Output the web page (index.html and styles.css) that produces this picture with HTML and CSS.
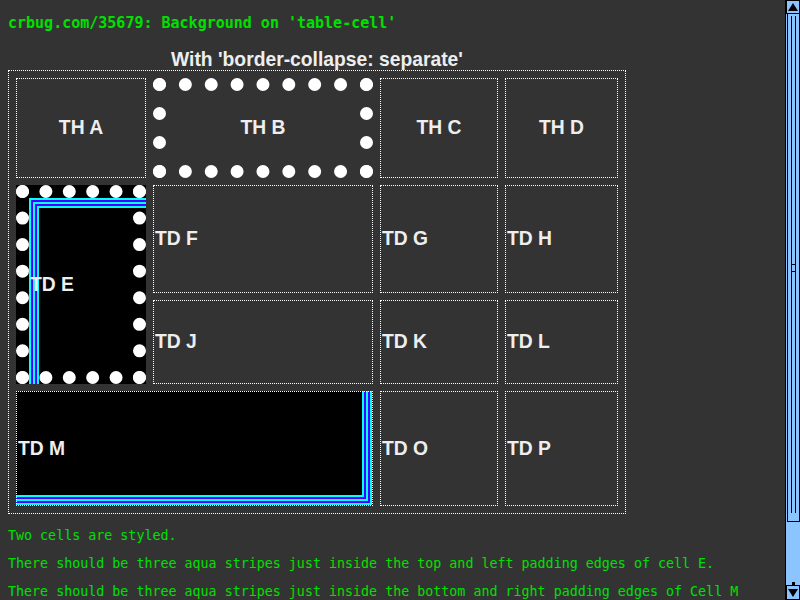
FILE: index.html
```html
<!DOCTYPE html>
<html>
<head>
<meta charset="utf-8">
<title>crbug.com/35679</title>
<link rel="stylesheet" href="styles.css">
</head>
<body>
<p class="title">crbug.com/35679: Background on 'table-cell'</p>
<table class="grid">
  <caption class="cap">With 'border-collapse: separate'</caption>
  <tr class="r1">
    <th class="w1">TH A</th>
    <th class="w2 dots">TH B</th>
    <th class="w3">TH C</th>
    <th class="w4">TH D</th>
  </tr>
  <tr class="r2">
    <td rowspan="2" class="dots cell-e">TD E</td>
    <td>TD F</td>
    <td>TD G</td>
    <td>TD H</td>
  </tr>
  <tr class="r3">
    <td>TD J</td>
    <td>TD K</td>
    <td>TD L</td>
  </tr>
  <tr class="r4">
    <td colspan="2" class="cell-m">TD M</td>
    <td>TD O</td>
    <td>TD P</td>
  </tr>
</table>
<p class="note first">Two cells are styled.</p>
<p class="note">There should be three aqua stripes just inside the top and left padding edges of cell E.</p>
<p class="note">There should be three aqua stripes just inside the bottom and right padding edges of Cell M</p>

<div class="sb">
  <div class="sb-btn sb-up"></div>
  <div class="sb-thumb"><div class="sb-groove"></div><div class="sb-grip"></div></div>
  <div class="sb-track"></div>
  <div class="sb-btn sb-down"></div>
</div>
</body>
</html>
```

FILE: styles.css
```css
html {
  background: #333;
  overflow: hidden;
}
body {
  margin: 0 8px 8px;
  padding-top: 14px;
  background: #333;
  color: #eee;
}
.title {
  font-family: "DejaVu Sans Mono", monospace;
  font-weight: bold;
  font-size: 15px;
  color: #00e000;
  margin: 0 0 18px;
}
.grid {
  border: 1px dotted #fff;
  border-spacing: 7px;
  font-family: "Liberation Sans", Arial, sans-serif;
  font-weight: bold;
  font-size: 19.3px;
  color: #eee;
}
.cap {
  font-family: "Liberation Sans", Arial, sans-serif;
  font-weight: bold;
  font-size: 19.3px;
  line-height: 20px;
  color: #eee;
  padding-bottom: 0;
}
.grid th,
.grid td {
  border: 1px dotted #fff;
  padding: 1px;
  font-weight: bold;
  vertical-align: middle;
}
.grid td { text-align: left; }
.grid th { text-align: center; }
.r1 { height: 100px; }
.r2 { height: 108px; }
.r3 { height: 84px; }
.r4 { height: 115px; }
.w1 { width: 126px; }
.w2 { width: 192px; }
.w3 { width: 114px; }
.w4 { width: 109px; }
.grid .dots {
  border: 13px dotted #fff;
}
.cell-e {
  background-color: #000;
  background-image:
    linear-gradient(#000, #000),
    linear-gradient(#00ffff, #00ffff),
    linear-gradient(#4b00ff, #4b00ff),
    linear-gradient(#00ffff, #00ffff),
    linear-gradient(#4b00ff, #4b00ff),
    linear-gradient(#00ffff, #00ffff);
  background-position: 23px 23px, 21px 21px, 19px 19px, 17px 17px, 15px 15px, 13px 13px;
  background-size: 100% 100%;
  background-repeat: no-repeat;
  background-origin: border-box;
  background-clip: border-box;
}
.cell-m {
  background-color: #000;
  background-image:
    linear-gradient(#000, #000),
    linear-gradient(#00ffff, #00ffff),
    linear-gradient(#4b00ff, #4b00ff),
    linear-gradient(#00ffff, #00ffff),
    linear-gradient(#4b00ff, #4b00ff),
    linear-gradient(#00ffff, #00ffff);
  background-position:
    right 11px bottom 11px,
    right 9px bottom 9px,
    right 7px bottom 7px,
    right 5px bottom 5px,
    right 3px bottom 3px,
    right 1px bottom 1px;
  background-size: 100% 100%;
  background-repeat: no-repeat;
  background-origin: border-box;
  background-clip: border-box;
}
.note {
  font-family: "DejaVu Sans Mono", monospace;
  font-size: 13.333px;
  color: #00e000;
  margin: 13.333px 0;
  white-space: nowrap;
}
.note.first {
  margin-top: 13.5px;
}

/* drawn scrollbar */
.sb {
  position: fixed;
  top: 0;
  right: 0;
  width: 15px;
  height: 600px;
  box-sizing: border-box;
  background: #8cc4ff;
  border-left: 1px solid #000;
  display: flex;
  flex-direction: column;
}
.sb-btn {
  height: 14px;
  flex: none;
  box-sizing: border-box;
  display: flex;
  align-items: center;
  justify-content: center;
  border: 1px solid #000;
}
.sb-up::before {
  content: "";
  border-left: 5px solid transparent;
  border-right: 5px solid transparent;
  border-bottom: 8px solid #000;
}
.sb-down {
  height: 15px;
  position: relative;
}
.sb-down::before {
  content: "";
  border-left: 5px solid transparent;
  border-right: 5px solid transparent;
  border-top: 8px solid #000;
}
.sb-down::after {
  content: "";
  position: absolute;
  left: 5px;
  top: -4px;
  width: 3px;
  height: 4px;
  background: #000;
}
.sb-thumb {
  height: 508px;
  flex: none;
  box-sizing: border-box;
  margin: 0 0 0 1px;
  border-left: 1px solid #000;
  border-right: 1px solid #000;
  border-bottom: 1px solid #000;
  display: flex;
  justify-content: center;
  position: relative;
}
.sb-groove {
  width: 3px;
  border-left: 1px solid #000;
  border-right: 1px solid #000;
  margin: 2px 0 8px;
}
.sb-grip {
  position: absolute;
  left: 3px;
  top: 250px;
  width: 4px;
  height: 6px;
  border-top: 1px solid #000;
  border-bottom: 1px solid #000;
}
.sb-track {
  flex: 1;
}
```
